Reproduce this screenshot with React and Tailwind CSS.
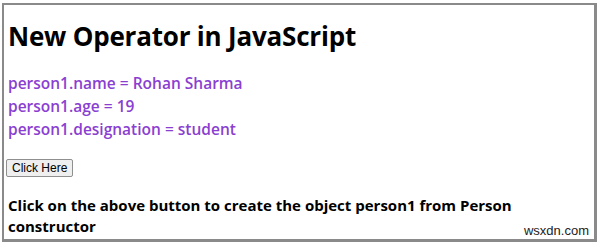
export default function App() {
  return (
    <div className="w-[600px] h-[245px] bg-white pt-[3px] pl-[2px]">
      <div className="relative w-[595px] h-[239px] border-2 border-[#8a8a8a] border-b-[3px] border-r-[3px] px-[4px] font-['Open_Sans',sans-serif]">
        <h1 className="text-[26px] font-bold text-black leading-[34px] mt-[14px] tracking-[-0.2px]">New Operator in JavaScript</h1>
        <div className="mt-[19px] text-[15.5px] font-semibold leading-[23px] text-[#8a3fd1]">
          <div>person1.name = Rohan Sharma</div>
          <div>person1.age = 19</div>
          <div>person1.designation = student</div>
        </div>
        <button className="mt-[18px] -ml-[2px] h-[18px] px-[5px] border border-[#8f8f8f] rounded-[2px] bg-[#efefef] text-[12px] leading-[14px] text-black font-['Liberation_Sans',sans-serif]">Click Here</button>
        <div className="mt-[17px] text-[15px] font-bold leading-[21px] text-black w-[520px]">
          Click on the above button to create the object person1 from Person constructor
        </div>
        <div className="absolute right-[5px] bottom-[1px] text-[13px] leading-[14px] text-[#222] font-['Liberation_Sans',sans-serif]">wsxdn.com</div>
      </div>
    </div>
  );
}
